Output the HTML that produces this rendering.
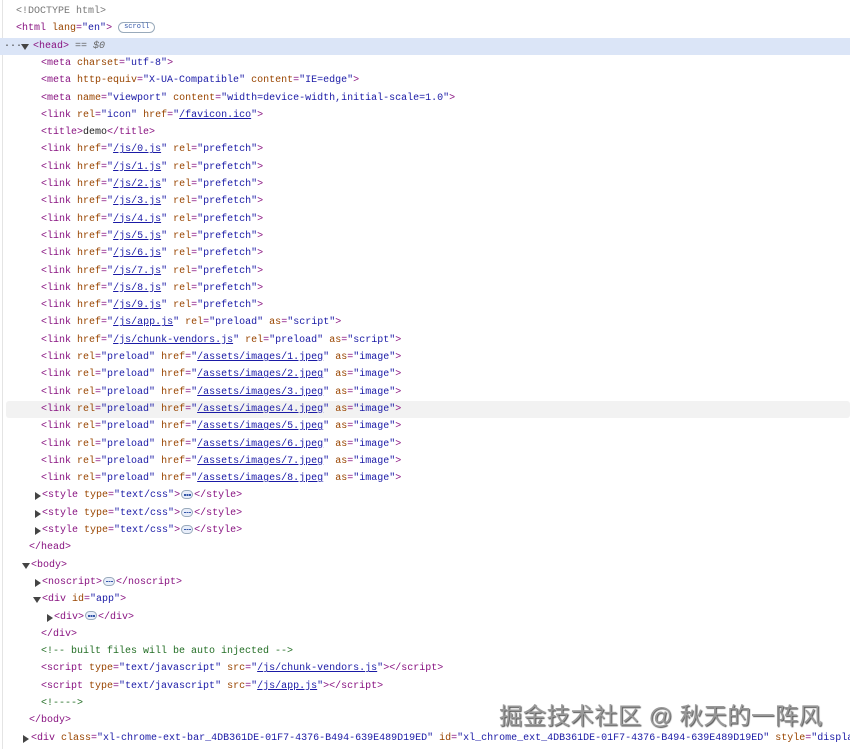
<!DOCTYPE html>
<html><head><meta charset="utf-8">
<style>
html,body{margin:0;padding:0;background:#fff;width:850px;height:749px;overflow:hidden;}
#w{position:relative;width:850px;height:749px;overflow:hidden;font-family:"Liberation Mono",monospace;font-size:10px;color:#222;}
#in{position:absolute;left:0;top:2px;width:850px;height:749px;}
#bl{position:absolute;left:2px;top:0;width:1px;height:749px;background:#e4e4e4;}
.l{position:absolute;left:0;right:0;height:17.3px;line-height:17.3px;white-space:pre;overflow:hidden;}
.t{color:#881280}.a{color:#994500}.v{color:#1a1aa6}.u{color:#1a1aa6;text-decoration:underline}
.g{color:#777}.c{color:#236e25}
.ar{position:absolute;width:0;height:0;}
.dn{border-left:4px solid transparent;border-right:4px solid transparent;border-top:6px solid #444;margin-top:6px}
.rt{border-top:4px solid transparent;border-bottom:4px solid transparent;border-left:6px solid #444;margin-top:5px}
.el{display:inline-block;position:relative;width:12px;height:9px;border:1px solid #9ab;border-radius:5px;background:#e8eefa;vertical-align:middle;margin:0 1px;box-sizing:border-box}
.el::after{content:"";position:absolute;left:2px;top:3px;width:1.5px;height:1.5px;background:#3356a8;box-shadow:2.5px 0 0 #3356a8,5px 0 0 #3356a8}
#wm{position:absolute;left:499px;top:697px;font-family:"Liberation Sans","Noto Sans CJK SC",sans-serif;font-size:23.5px;color:#999;text-shadow:1px 1px 1px #555;letter-spacing:0.3px;white-space:nowrap}
</style></head><body><div id="w"><div id="bl"></div><div id="in">
<div class="l" style="top:1px"><span style="position:absolute;left:16px" class="g">&lt;!DOCTYPE html&gt;</span></div>
<div class="l" style="top:18.3px"><span style="position:absolute;left:16px"><span class="t">&lt;html </span><span class="a">lang</span><span class="t">=</span><span class="v">"en"</span><span class="t">&gt;</span> <span style="display:inline-block;border:1px solid #9ab;border-radius:7px;font-size:7px;line-height:9px;padding:0 5px;color:#3356a8;vertical-align:middle">scroll</span></span></div>
<div class="l" style="top:35.6px;background:#dbe5f7"><span style="position:absolute;left:4px;color:#444">···</span><div class="ar dn" style="left:21px"></div><span style="position:absolute;left:33px"><span class="t">&lt;head&gt;</span> <span style="color:#666">== <i>$0</i></span></span></div>
<div class="l" style="top:52.9px"><span style="position:absolute;left:41px"><span class="t">&lt;meta </span><span class="a">charset</span><span class="t">=</span><span class="v">"utf-8"</span><span class="t">&gt;</span></span></div>
<div class="l" style="top:70.2px"><span style="position:absolute;left:41px"><span class="t">&lt;meta </span><span class="a">http-equiv</span><span class="t">=</span><span class="v">"X-UA-Compatible"</span> <span class="a">content</span><span class="t">=</span><span class="v">"IE=edge"</span><span class="t">&gt;</span></span></div>
<div class="l" style="top:87.5px"><span style="position:absolute;left:41px"><span class="t">&lt;meta </span><span class="a">name</span><span class="t">=</span><span class="v">"viewport"</span> <span class="a">content</span><span class="t">=</span><span class="v">"width=device-width,initial-scale=1.0"</span><span class="t">&gt;</span></span></div>
<div class="l" style="top:104.8px"><span style="position:absolute;left:41px"><span class="t">&lt;link </span><span class="a">rel</span><span class="t">=</span><span class="v">"icon"</span> <span class="a">href</span><span class="t">=</span><span class="v">"<span class="u">/favicon.ico</span>"</span><span class="t">&gt;</span></span></div>
<div class="l" style="top:122.1px"><span style="position:absolute;left:41px"><span class="t">&lt;title&gt;</span>demo<span class="t">&lt;/title&gt;</span></span></div>
<div class="l" style="top:139.4px"><span style="position:absolute;left:41px"><span class="t">&lt;link </span><span class="a">href</span><span class="t">=</span><span class="v">"<span class="u">/js/0.js</span>"</span> <span class="a">rel</span><span class="t">=</span><span class="v">"prefetch"</span><span class="t">&gt;</span></span></div>
<div class="l" style="top:156.7px"><span style="position:absolute;left:41px"><span class="t">&lt;link </span><span class="a">href</span><span class="t">=</span><span class="v">"<span class="u">/js/1.js</span>"</span> <span class="a">rel</span><span class="t">=</span><span class="v">"prefetch"</span><span class="t">&gt;</span></span></div>
<div class="l" style="top:174px"><span style="position:absolute;left:41px"><span class="t">&lt;link </span><span class="a">href</span><span class="t">=</span><span class="v">"<span class="u">/js/2.js</span>"</span> <span class="a">rel</span><span class="t">=</span><span class="v">"prefetch"</span><span class="t">&gt;</span></span></div>
<div class="l" style="top:191.3px"><span style="position:absolute;left:41px"><span class="t">&lt;link </span><span class="a">href</span><span class="t">=</span><span class="v">"<span class="u">/js/3.js</span>"</span> <span class="a">rel</span><span class="t">=</span><span class="v">"prefetch"</span><span class="t">&gt;</span></span></div>
<div class="l" style="top:208.6px"><span style="position:absolute;left:41px"><span class="t">&lt;link </span><span class="a">href</span><span class="t">=</span><span class="v">"<span class="u">/js/4.js</span>"</span> <span class="a">rel</span><span class="t">=</span><span class="v">"prefetch"</span><span class="t">&gt;</span></span></div>
<div class="l" style="top:225.9px"><span style="position:absolute;left:41px"><span class="t">&lt;link </span><span class="a">href</span><span class="t">=</span><span class="v">"<span class="u">/js/5.js</span>"</span> <span class="a">rel</span><span class="t">=</span><span class="v">"prefetch"</span><span class="t">&gt;</span></span></div>
<div class="l" style="top:243.2px"><span style="position:absolute;left:41px"><span class="t">&lt;link </span><span class="a">href</span><span class="t">=</span><span class="v">"<span class="u">/js/6.js</span>"</span> <span class="a">rel</span><span class="t">=</span><span class="v">"prefetch"</span><span class="t">&gt;</span></span></div>
<div class="l" style="top:260.5px"><span style="position:absolute;left:41px"><span class="t">&lt;link </span><span class="a">href</span><span class="t">=</span><span class="v">"<span class="u">/js/7.js</span>"</span> <span class="a">rel</span><span class="t">=</span><span class="v">"prefetch"</span><span class="t">&gt;</span></span></div>
<div class="l" style="top:277.8px"><span style="position:absolute;left:41px"><span class="t">&lt;link </span><span class="a">href</span><span class="t">=</span><span class="v">"<span class="u">/js/8.js</span>"</span> <span class="a">rel</span><span class="t">=</span><span class="v">"prefetch"</span><span class="t">&gt;</span></span></div>
<div class="l" style="top:295.1px"><span style="position:absolute;left:41px"><span class="t">&lt;link </span><span class="a">href</span><span class="t">=</span><span class="v">"<span class="u">/js/9.js</span>"</span> <span class="a">rel</span><span class="t">=</span><span class="v">"prefetch"</span><span class="t">&gt;</span></span></div>
<div class="l" style="top:312.4px"><span style="position:absolute;left:41px"><span class="t">&lt;link </span><span class="a">href</span><span class="t">=</span><span class="v">"<span class="u">/js/app.js</span>"</span> <span class="a">rel</span><span class="t">=</span><span class="v">"preload"</span> <span class="a">as</span><span class="t">=</span><span class="v">"script"</span><span class="t">&gt;</span></span></div>
<div class="l" style="top:329.7px"><span style="position:absolute;left:41px"><span class="t">&lt;link </span><span class="a">href</span><span class="t">=</span><span class="v">"<span class="u">/js/chunk-vendors.js</span>"</span> <span class="a">rel</span><span class="t">=</span><span class="v">"preload"</span> <span class="a">as</span><span class="t">=</span><span class="v">"script"</span><span class="t">&gt;</span></span></div>
<div class="l" style="top:347px"><span style="position:absolute;left:41px"><span class="t">&lt;link </span><span class="a">rel</span><span class="t">=</span><span class="v">"preload"</span> <span class="a">href</span><span class="t">=</span><span class="v">"<span class="u">/assets/images/1.jpeg</span>"</span> <span class="a">as</span><span class="t">=</span><span class="v">"image"</span><span class="t">&gt;</span></span></div>
<div class="l" style="top:364.3px"><span style="position:absolute;left:41px"><span class="t">&lt;link </span><span class="a">rel</span><span class="t">=</span><span class="v">"preload"</span> <span class="a">href</span><span class="t">=</span><span class="v">"<span class="u">/assets/images/2.jpeg</span>"</span> <span class="a">as</span><span class="t">=</span><span class="v">"image"</span><span class="t">&gt;</span></span></div>
<div class="l" style="top:381.6px"><span style="position:absolute;left:41px"><span class="t">&lt;link </span><span class="a">rel</span><span class="t">=</span><span class="v">"preload"</span> <span class="a">href</span><span class="t">=</span><span class="v">"<span class="u">/assets/images/3.jpeg</span>"</span> <span class="a">as</span><span class="t">=</span><span class="v">"image"</span><span class="t">&gt;</span></span></div>
<div class="l" style="top:398.9px;background:#f2f2f2;left:6px;border-radius:3px"><span style="position:absolute;left:35px"><span class="t">&lt;link </span><span class="a">rel</span><span class="t">=</span><span class="v">"preload"</span> <span class="a">href</span><span class="t">=</span><span class="v">"<span class="u">/assets/images/4.jpeg</span>"</span> <span class="a">as</span><span class="t">=</span><span class="v">"image"</span><span class="t">&gt;</span></span></div>
<div class="l" style="top:416.2px"><span style="position:absolute;left:41px"><span class="t">&lt;link </span><span class="a">rel</span><span class="t">=</span><span class="v">"preload"</span> <span class="a">href</span><span class="t">=</span><span class="v">"<span class="u">/assets/images/5.jpeg</span>"</span> <span class="a">as</span><span class="t">=</span><span class="v">"image"</span><span class="t">&gt;</span></span></div>
<div class="l" style="top:433.5px"><span style="position:absolute;left:41px"><span class="t">&lt;link </span><span class="a">rel</span><span class="t">=</span><span class="v">"preload"</span> <span class="a">href</span><span class="t">=</span><span class="v">"<span class="u">/assets/images/6.jpeg</span>"</span> <span class="a">as</span><span class="t">=</span><span class="v">"image"</span><span class="t">&gt;</span></span></div>
<div class="l" style="top:450.8px"><span style="position:absolute;left:41px"><span class="t">&lt;link </span><span class="a">rel</span><span class="t">=</span><span class="v">"preload"</span> <span class="a">href</span><span class="t">=</span><span class="v">"<span class="u">/assets/images/7.jpeg</span>"</span> <span class="a">as</span><span class="t">=</span><span class="v">"image"</span><span class="t">&gt;</span></span></div>
<div class="l" style="top:468.1px"><span style="position:absolute;left:41px"><span class="t">&lt;link </span><span class="a">rel</span><span class="t">=</span><span class="v">"preload"</span> <span class="a">href</span><span class="t">=</span><span class="v">"<span class="u">/assets/images/8.jpeg</span>"</span> <span class="a">as</span><span class="t">=</span><span class="v">"image"</span><span class="t">&gt;</span></span></div>
<div class="l" style="top:485.4px"><div class="ar rt" style="left:35px"></div><span style="position:absolute;left:42px"><span class="t">&lt;style </span><span class="a">type</span><span class="t">=</span><span class="v">"text/css"</span><span class="t">&gt;</span><span class="el"></span><span class="t">&lt;/style&gt;</span></span></div>
<div class="l" style="top:502.7px"><div class="ar rt" style="left:35px"></div><span style="position:absolute;left:42px"><span class="t">&lt;style </span><span class="a">type</span><span class="t">=</span><span class="v">"text/css"</span><span class="t">&gt;</span><span class="el"></span><span class="t">&lt;/style&gt;</span></span></div>
<div class="l" style="top:520px"><div class="ar rt" style="left:35px"></div><span style="position:absolute;left:42px"><span class="t">&lt;style </span><span class="a">type</span><span class="t">=</span><span class="v">"text/css"</span><span class="t">&gt;</span><span class="el"></span><span class="t">&lt;/style&gt;</span></span></div>
<div class="l" style="top:537.3px"><span style="position:absolute;left:29px" class="t">&lt;/head&gt;</span></div>
<div class="l" style="top:554.6px"><div class="ar dn" style="left:22px"></div><span style="position:absolute;left:31px" class="t">&lt;body&gt;</span></div>
<div class="l" style="top:571.9px"><div class="ar rt" style="left:35px"></div><span style="position:absolute;left:42px"><span class="t">&lt;noscript&gt;</span><span class="el"></span><span class="t">&lt;/noscript&gt;</span></span></div>
<div class="l" style="top:589.2px"><div class="ar dn" style="left:33px"></div><span style="position:absolute;left:42px"><span class="t">&lt;div </span><span class="a">id</span><span class="t">=</span><span class="v">"app"</span><span class="t">&gt;</span></span></div>
<div class="l" style="top:606.5px"><div class="ar rt" style="left:47px"></div><span style="position:absolute;left:54px"><span class="t">&lt;div&gt;</span><span class="el"></span><span class="t">&lt;/div&gt;</span></span></div>
<div class="l" style="top:623.8px"><span style="position:absolute;left:41px" class="t">&lt;/div&gt;</span></div>
<div class="l" style="top:641.1px"><span style="position:absolute;left:41px" class="c">&lt;!-- built files will be auto injected --&gt;</span></div>
<div class="l" style="top:658.4px"><span style="position:absolute;left:41px"><span class="t">&lt;script </span><span class="a">type</span><span class="t">=</span><span class="v">"text/javascript"</span> <span class="a">src</span><span class="t">=</span><span class="v">"<span class="u">/js/chunk-vendors.js</span>"</span><span class="t">&gt;&lt;/script&gt;</span></span></div>
<div class="l" style="top:675.7px"><span style="position:absolute;left:41px"><span class="t">&lt;script </span><span class="a">type</span><span class="t">=</span><span class="v">"text/javascript"</span> <span class="a">src</span><span class="t">=</span><span class="v">"<span class="u">/js/app.js</span>"</span><span class="t">&gt;&lt;/script&gt;</span></span></div>
<div class="l" style="top:693px"><span style="position:absolute;left:41px" class="c">&lt;!----&gt;</span></div>
<div class="l" style="top:710.3px"><span style="position:absolute;left:29px" class="t">&lt;/body&gt;</span></div>
<div class="l" style="top:727.6px"><div class="ar rt" style="left:23px"></div><span style="position:absolute;left:31px"><span class="t">&lt;div </span><span class="a">class</span><span class="t">=</span><span class="v">"xl-chrome-ext-bar_4DB361DE-01F7-4376-B494-639E489D19ED"</span> <span class="a">id</span><span class="t">=</span><span class="v">"xl_chrome_ext_4DB361DE-01F7-4376-B494-639E489D19ED"</span> <span class="a">style</span><span class="t">=</span><span class="v">"displa</span></span></div>
</div>
<div id="wm">掘金技术社区 @ 秋天的一阵风</div>
</div></body></html>
